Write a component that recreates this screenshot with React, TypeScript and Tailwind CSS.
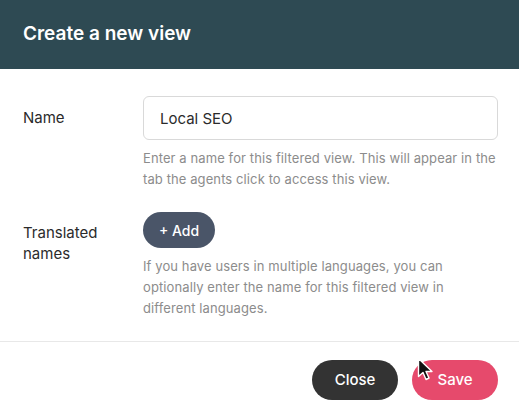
export default function App() {
  return (
    <div className="relative w-[519px] h-[416px] bg-white overflow-hidden font-['Inter',sans-serif] text-[#2b2b2b]">
      {/* Header */}
      <div className="h-[69px] bg-[#2e4a53] flex items-center px-[23px]">
        <h1 className="text-white text-[19px] font-semibold">Create a new view</h1>
      </div>

      {/* Body */}
      <div className="px-[23px] pt-[27px]">
        <div className="flex">
          <div className="w-[120px] shrink-0 text-[15px] leading-[44px]">Name</div>
          <div className="flex-1">
            <input
              defaultValue="Local SEO"
              className="w-[355px] h-[44px] rounded-md border border-[#d9d9d9] px-4 text-[15px] text-[#2b2b2b] outline-none"
            />
            <p className="mt-[8px] w-[362px] text-[13px] tracking-[0.1px] leading-[21px] text-[#8c8c8c]">
              Enter a name for this filtered view. This will appear in the tab the agents click to access this view.
            </p>
          </div>
        </div>

        <div className="flex mt-[22px]">
          <div className="w-[120px] shrink-0 text-[15px] leading-[21px] pt-[10px]">
            Translated
            <br />
            names
          </div>
          <div className="flex-1">
            <button className="h-[36px] w-[72px] rounded-full bg-[#4a5568] text-white text-[14px] font-medium">
              + Add
            </button>
            <p className="mt-[8px] w-[345px] text-[13px] tracking-[0.1px] leading-[21px] text-[#8c8c8c]">
              If you have users in multiple languages, you can optionally enter the name for this filtered view in different languages.
            </p>
          </div>
        </div>
      </div>

      {/* Footer */}
      <div className="absolute left-0 right-0 top-[341px] border-t border-[#e8e8e8] flex justify-end gap-[14px] pt-[18px] pr-[21px]">
        <button className="h-[40px] w-[86px] rounded-full bg-[#333333] text-white text-[15px] font-medium">Close</button>
        <button className="h-[40px] w-[86px] rounded-full bg-[#e64a6c] text-white text-[15px] font-medium">Save</button>
      </div>

      {/* Mouse cursor */}
      <svg className="absolute left-[417px] top-[357px]" width="20" height="26" viewBox="0 0 20 26">
        <path d="M1.5 1.5 L1.5 19.5 L6 15.5 L9 22.5 L12 21 L9 14.5 L15 14.5 Z" fill="#111" stroke="#fff" strokeWidth="1.4" strokeLinejoin="round" />
      </svg>
    </div>
  )
}
